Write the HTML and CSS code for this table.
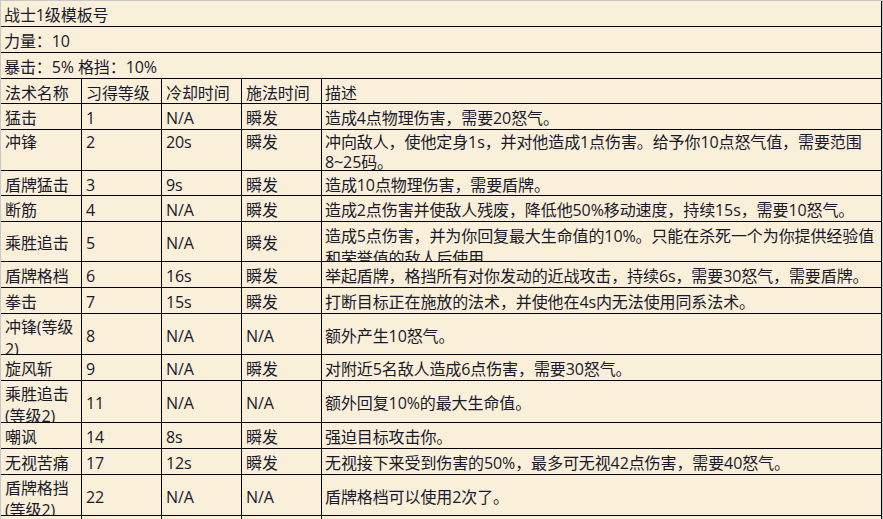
FILE: index.html
```html
<!DOCTYPE html>
<html lang="zh-CN">
<head>
<meta charset="utf-8">
<title>战士1级模板号</title>
<link rel="stylesheet" href="styles.css">
</head>
<body>
<div class="sheet">
  <div class="row full"><div class="cell span">战士1级模板号</div></div>
  <div class="row full"><div class="cell span">力量：10</div></div>
  <div class="row full"><div class="cell span">暴击：5% 格挡：10%</div></div>
  <div class="row head">
    <div class="cell">法术名称</div><div class="cell">习得等级</div><div class="cell">冷却时间</div><div class="cell">施法时间</div><div class="cell">描述</div>
  </div>
  <div class="row">
    <div class="cell">猛击</div><div class="cell">1</div><div class="cell">N/A</div><div class="cell">瞬发</div><div class="cell">造成4点物理伤害，需要20怒气。</div>
  </div>
  <div class="row tall tops">
    <div class="cell">冲锋</div><div class="cell">2</div><div class="cell">20s</div><div class="cell">瞬发</div><div class="cell">冲向敌人，使他定身1s，并对他造成1点伤害。给予你10点怒气值，需要范围8~25码。</div>
  </div>
  <div class="row short">
    <div class="cell">盾牌猛击</div><div class="cell">3</div><div class="cell">9s</div><div class="cell">瞬发</div><div class="cell">造成10点物理伤害，需要盾牌。</div>
  </div>
  <div class="row">
    <div class="cell">断筋</div><div class="cell">4</div><div class="cell">N/A</div><div class="cell">瞬发</div><div class="cell">造成2点伤害并使敌人残废，降低他50%移动速度，持续15s，需要10怒气。</div>
  </div>
  <div class="row mid">
    <div class="cell">乘胜追击</div><div class="cell">5</div><div class="cell">N/A</div><div class="cell">瞬发</div><div class="cell wrap desc-wrap"><span class="lines">造成5点伤害，并为你回复最大生命值的10%。只能在杀死一个为你提供经验值<br>和荣誉值的敌人后使用</span></div>
  </div>
  <div class="row">
    <div class="cell">盾牌格档</div><div class="cell">6</div><div class="cell">16s</div><div class="cell">瞬发</div><div class="cell">举起盾牌，格挡所有对你发动的近战攻击，持续6s，需要30怒气，需要盾牌。</div>
  </div>
  <div class="row">
    <div class="cell">拳击</div><div class="cell">7</div><div class="cell">15s</div><div class="cell">瞬发</div><div class="cell">打断目标正在施放的法术，并使他在4s内无法使用同系法术。</div>
  </div>
  <div class="row tall">
    <div class="cell wrap">冲锋(等级2)</div><div class="cell">8</div><div class="cell">N/A</div><div class="cell">N/A</div><div class="cell">额外产生10怒气。</div>
  </div>
  <div class="row">
    <div class="cell">旋风斩</div><div class="cell">9</div><div class="cell">N/A</div><div class="cell">瞬发</div><div class="cell">对附近5名敌人造成6点伤害，需要30怒气。</div>
  </div>
  <div class="row taller">
    <div class="cell wrap">乘胜追击(等级2)</div><div class="cell">11</div><div class="cell">N/A</div><div class="cell">N/A</div><div class="cell">额外回复10%的最大生命值。</div>
  </div>
  <div class="row">
    <div class="cell">嘲讽</div><div class="cell">14</div><div class="cell">8s</div><div class="cell">瞬发</div><div class="cell">强迫目标攻击你。</div>
  </div>
  <div class="row">
    <div class="cell">无视苦痛</div><div class="cell">17</div><div class="cell">12s</div><div class="cell">瞬发</div><div class="cell">无视接下来受到伤害的50%，最多可无视42点伤害，需要40怒气。</div>
  </div>
  <div class="row tall">
    <div class="cell wrap">盾牌格挡(等级2)</div><div class="cell">22</div><div class="cell">N/A</div><div class="cell">N/A</div><div class="cell">盾牌格档可以使用2次了。</div>
  </div>
  <div class="row">
    <div class="cell"></div><div class="cell"></div><div class="cell"></div><div class="cell"></div><div class="cell"></div>
  </div>
</div>
</body>
</html>
```
FILE: styles.css
```css
html {
  overflow: hidden;
}
body {
  margin: 0;
  background: #faefd9;
  font-family: "Open Sans", "Noto Sans CJK SC", sans-serif;
  font-size: 16px;
  color: #161a2c;
}
.sheet {
  box-sizing: border-box;
  width: 883px;
  border: 1px solid #c8c8c8;
  border-bottom: none;
  background: #faefd9;
}
.row {
  display: grid;
  grid-template-columns: 81px 80px 80px 80px 560px;
  height: 26px;
}
.row.head {
  height: 25px;
}
.row.short {
  height: 25px;
}
.row.tall {
  height: 41px;
}
.row.taller {
  height: 42px;
}
.row.mid {
  height: 40px;
}
.cell {
  box-sizing: border-box;
  display: flex;
  align-items: center;
  padding: 3px 4px 0 4px;
  border-right: 1px solid #000;
  border-bottom: 1px solid #000;
  line-height: 22px;
  overflow: hidden;
  letter-spacing: -0.1px;
}
.cell:last-child {
  padding-left: 3px;
  padding-right: 0;
}
.cell.span {
  grid-column: 1 / -1;
}
.cell.wrap {
  align-items: flex-start;
  padding-top: 2px;
}
.cell.desc-wrap {
  padding-top: 3px;
}
.lines {
  white-space: nowrap;
}
.tops .cell {
  align-items: flex-start;
  padding-top: 2px;
  line-height: 20px;
}
```
